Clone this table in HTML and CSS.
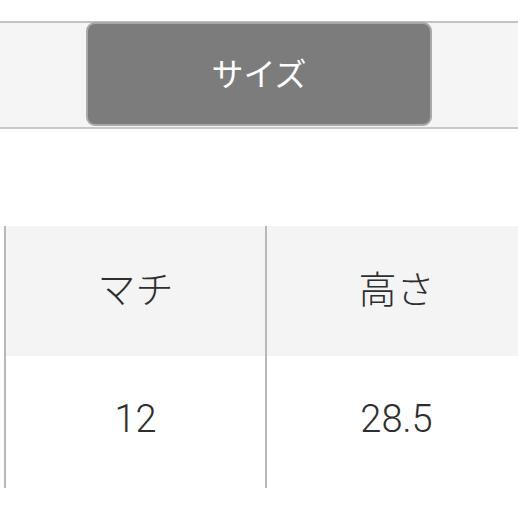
FILE: index.html
```html
<!DOCTYPE html>
<html lang="ja">
<head>
<meta charset="utf-8">
<link rel="stylesheet" href="styles.css">
</head>
<body>
<div class="tabs">
  <div class="tab-active">サイズ</div>
</div>
<table class="size-table">
  <tr class="head">
    <th>マチ</th>
    <th>高さ</th>
  </tr>
  <tr class="body-row">
    <td>12</td>
    <td>28.5</td>
  </tr>
</table>
</body>
</html>
```
FILE: styles.css
```css
html, body {
  margin: 0;
  padding: 0;
  background: #ffffff;
  overflow: hidden;
}
body {
  width: 518px;
  height: 518px;
  font-family: Roboto, "Noto Sans CJK JP", "Noto Sans", sans-serif;
}
.tabs {
  margin-top: 21px;
  height: 104px;
  border-top: 2px solid #c2c2c2;
  border-bottom: 2px solid #c8c8c8;
  background: #f5f5f5;
  display: flex;
  padding-left: 86px;
}
.tab-active {
  width: 346px;
  height: 104px;
  margin-top: -1px;
  border: 2px solid #a9a9a9;
  border-radius: 9px;
  background: #7c7c7c;
  color: #ffffff;
  font-size: 32px;
  font-weight: 400;
  display: flex;
  align-items: center;
  justify-content: center;
  padding-bottom: 4px;
  box-sizing: border-box;
}
.size-table {
  margin-top: 97px;
  margin-left: 4px;
  border-collapse: collapse;
  table-layout: fixed;
  width: 524px;
}
.size-table th,
.size-table td {
  width: 260px;
  border-left: 2px solid #b8b8b8;
  border-right: 2px solid #b8b8b8;
  text-align: center;
  color: #2e2e2e;
  font-size: 38px;
  font-weight: 300;
  padding: 0;
}
.head th {
  height: 130px;
  background: #f4f4f4;
  padding-bottom: 10px;
  box-sizing: border-box;
}
.body-row td {
  height: 132px;
  background: #ffffff;
  padding-bottom: 6px;
  box-sizing: border-box;
}
```
